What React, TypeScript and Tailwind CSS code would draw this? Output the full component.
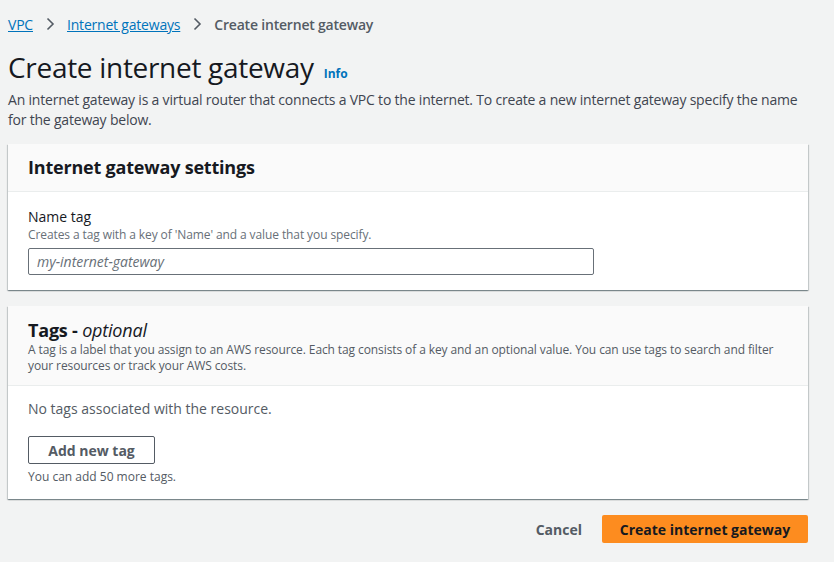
import React from "react";

function Chevron() {
  return (
    <svg width="16" height="16" viewBox="0 0 16 16" className="mx-[9px] text-[#545b64]" fill="none">
      <path d="M5.5 2.5 11 8l-5.5 5.5" stroke="currentColor" strokeWidth="1.6" />
    </svg>
  );
}

function Panel({ header, children }: { header: React.ReactNode; children: React.ReactNode }) {
  return (
    <div className="bg-white shadow-[0_1px_1px_0_rgba(0,28,36,0.3),1px_1px_1px_0_rgba(0,28,36,0.15),-1px_1px_1px_0_rgba(0,28,36,0.15)]">
      <div className="border-b border-[#eaeded] bg-[#fafafa] px-5">{header}</div>
      <div className="px-5">{children}</div>
    </div>
  );
}

export default function App() {
  return (
    <div
      className="min-h-[562px] w-[834px] bg-[#f2f3f3] pl-2 pr-[26px] text-[#16191f]"
      style={{ fontFamily: '"Open Sans", "Noto Sans", Arial, sans-serif' }}
    >
      <nav className="flex h-[48px] items-center text-[14px] tracking-[-0.2px]">
        <a href="#" className="text-[#0073bb] underline">VPC</a>
        <Chevron />
        <a href="#" className="text-[#0073bb] underline">Internet gateways</a>
        <Chevron />
        <span className="font-semibold text-[#545b64]">Create internet gateway</span>
      </nav>

      <div className="flex items-baseline">
        <h1 className="text-[28px] leading-[38px] tracking-[-0.3px]">Create internet gateway</h1>
        <a href="#" className="ml-[10px] text-[12px] font-bold text-[#0073bb]">Info</a>
      </div>
      <p className="mt-[4px] text-[14px] leading-[20px] tracking-[-0.2px] text-[#3f4550]">
        An internet gateway is a virtual router that connects a VPC to the internet. To create a new internet gateway specify the name for the gateway below.
      </p>

      <div className="mt-[14px]">
        <Panel
          header={
            <h2 className="flex h-[47px] items-center text-[18px] font-bold tracking-[-0.2px]">Internet gateway settings</h2>
          }
        >
          <div className="pt-[15px] pb-[15px]">
            <div className="text-[14px] leading-[20px]">Name tag</div>
            <div className="text-[12px] leading-[16px] tracking-[-0.1px] text-[#687078]">
              Creates a tag with a key of 'Name' and a value that you specify.
            </div>
            <input
              className="mt-[5px] h-[27px] w-[566px] rounded-[2px] border border-[#687078] px-[8px] text-[14px] italic placeholder:text-[#687078]"
              placeholder="my-internet-gateway"
            />
          </div>
        </Panel>
      </div>

      <div className="mt-[16px]">
        <Panel
          header={
            <div className="pt-[12px] pb-[11px]">
              <h2 className="text-[18px] font-bold leading-[24px] tracking-[-0.2px]">
                Tags - <span className="font-normal italic">optional</span>
              </h2>
              <p className="text-[12px] leading-[16px] tracking-[-0.1px] text-[#545b64]">
                A tag is a label that you assign to an AWS resource. Each tag consists of a key and an optional value. You can use tags to search and filter your resources or track your AWS costs.
              </p>
            </div>
          }
        >
          <div className="pt-[13px] pb-[14px]">
            <div className="text-[14px] leading-[20px] text-[#545b64]">No tags associated with the resource.</div>
            <button className="mt-[17px] h-[28px] w-[127px] rounded-[2px] border border-[#545b64] bg-white text-[14px] font-bold text-[#545b64]">
              Add new tag
            </button>
            <div className="mt-[5px] text-[12px] leading-[16px] text-[#545b64]">You can add 50 more tags.</div>
          </div>
        </Panel>
      </div>

      <div className="mt-[16px] flex items-center justify-end">
        <button className="px-5 text-[14px] font-bold text-[#545b64]">Cancel</button>
        <button className="h-[28px] w-[206px] rounded-[2px] bg-[#fd8c1f] text-[14px] font-bold">
          Create internet gateway
        </button>
      </div>
    </div>
  );
}
